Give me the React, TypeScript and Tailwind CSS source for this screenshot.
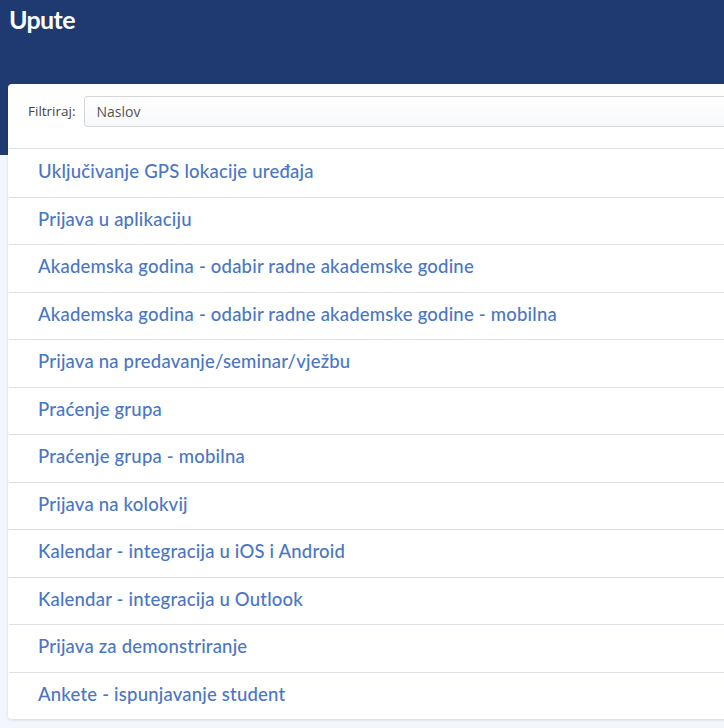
const upute = [
    "Uključivanje GPS lokacije uređaja",
    "Prijava u aplikaciju",
    "Akademska godina - odabir radne akademske godine",
    "Akademska godina - odabir radne akademske godine - mobilna",
    "Prijava na predavanje/seminar/vježbu",
    "Praćenje grupa",
    "Praćenje grupa - mobilna",
    "Prijava na kolokvij",
    "Kalendar - integracija u iOS i Android",
    "Kalendar - integracija u Outlook",
    "Prijava za demonstriranje",
    "Ankete - ispunjavanje student",
]

const App = () => {
    return (
        <div className="min-h-[728px] bg-[#f3f6fd] overflow-hidden">
            <div className="h-[155px] bg-[#1e3a70] px-[9px] pt-[3px]">
                <h1 className="text-white text-[25px] font-bold font-['Lato',sans-serif] tracking-tight leading-[32px]">Upute</h1>
            </div>
            <div className="-mt-[71px] ml-2 w-[740px] bg-white rounded-[4px] shadow-[0_1px_3px_rgba(0,0,0,0.12)]">
                <div className="flex items-center pt-3 pb-[21px] pl-[20px]">
                    <label className="text-[13.5px] text-[#444] font-['Open_Sans',sans-serif] mr-[8px]">Filtriraj:</label>
                    <input
                        className="flex-1 h-[31px] border border-[#d4d6da] rounded-[3px] px-3 text-[14px] text-[#555] placeholder:text-[#555] bg-gradient-to-b from-white to-[#f7f8fa] font-['Open_Sans',sans-serif] outline-none"
                        placeholder="Naslov"
                    />
                </div>
                <ul className="ml-px border-t border-[#dcdfe3]">
                    {upute.map((u, i) => (
                        <li key={u} className={`h-[47.5px] flex items-center pl-[29px] pb-[2px] ${i > 0 ? "border-t border-[#dcdfe3]" : ""}`}>
                            <a className="text-[#4a76c4] text-[18.5px] font-medium font-['Lato',sans-serif] tracking-[0.2px] cursor-pointer">{u}</a>
                        </li>
                    ))}
                </ul>
            </div>
        </div>
    )
}

export default App
